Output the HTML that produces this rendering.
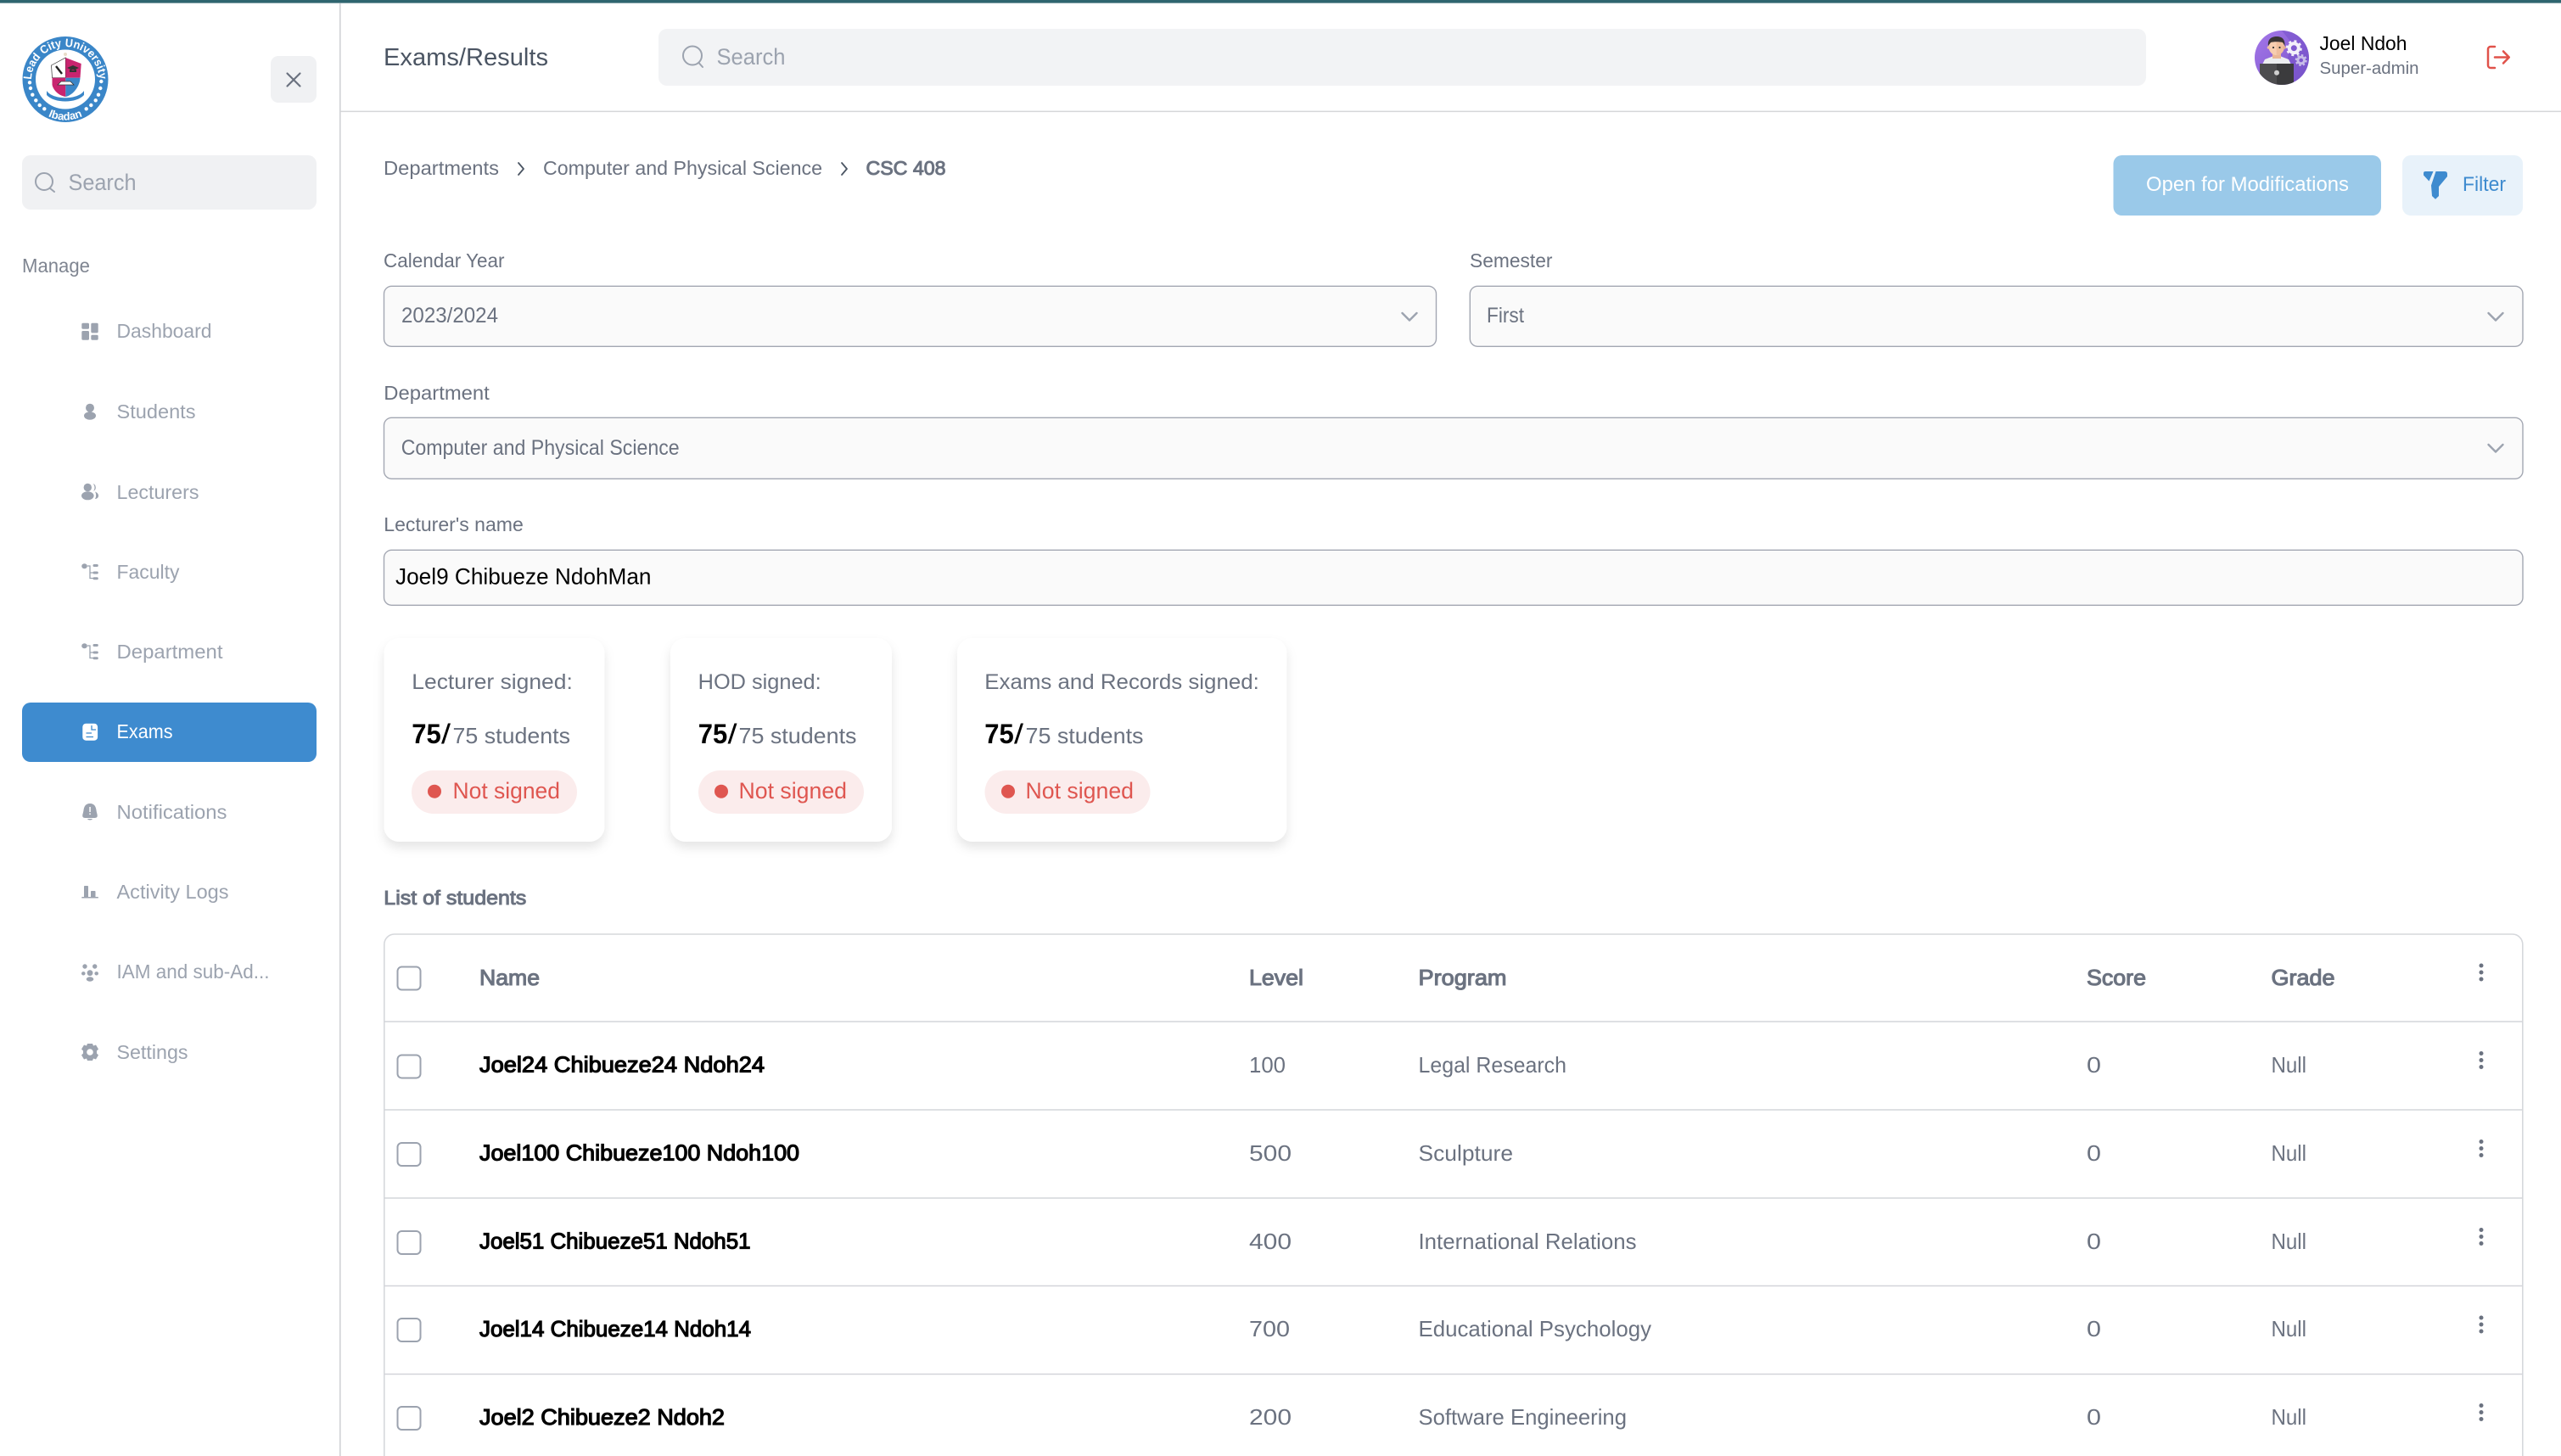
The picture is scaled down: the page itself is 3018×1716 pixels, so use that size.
<!DOCTYPE html>
<html lang="en">
<head>
<meta charset="utf-8">
<title>Exams/Results</title>
<style>
html,body{margin:0;padding:0;background:#fff;width:3018px;height:1716px;overflow:hidden}
svg{display:block}
text{font-family:"Liberation Sans",sans-serif;white-space:pre}
.nav{font-size:23px;fill:#9ca3af}
.lbl{font-size:23px;fill:#6b7280}
.val{font-size:25px;fill:#6b7280}
.crd{font-size:25px;fill:#6b7280}
.big{font-size:32px;font-weight:700;fill:#000}
.sl{font-size:32px;fill:#000}
.std{font-size:26px;fill:#6b7280}
.ns{font-size:27px;fill:#df5650}
.th{font-size:26px;fill:#6b7280;stroke:#6b7280;stroke-width:1.1}
.nm{font-size:26px;fill:#000;stroke:#000;stroke-width:1.2}
.td{font-size:26px;fill:#6b7280}
.ic{fill:#9ca3af}
.cb{fill:#fff;stroke:#9ca3af;stroke-width:2}
.rl{stroke:#d3d5da;stroke-width:1.6}
.kb{fill:#6b7280}
.sel{fill:#fafafa;stroke:#a3a7b2;stroke-width:1.4}
.chev{fill:none;stroke:#9ca3af;stroke-width:2.4;stroke-linecap:round;stroke-linejoin:round}
.card{fill:#fff;filter:url(#sh)}
.pill{fill:#fbecec}
.dot{fill:#df5650}
</style>
</head>
<body>
<svg xmlns="http://www.w3.org/2000/svg" width="3018" height="1716" viewBox="0 0 3018 1716">
<defs>
<filter id="sh" x="-20%" y="-20%" width="140%" height="140%"><feDropShadow dx="0" dy="7" stdDeviation="6" flood-color="#000" flood-opacity=".1"/></filter>
<clipPath id="av"><circle cx="2689" cy="68" r="32"/></clipPath>
<linearGradient id="avg" x1="0" y1="0" x2="1" y2="1"><stop offset="0" stop-color="#a678ea"/><stop offset="1" stop-color="#7552c8"/></linearGradient>
<path id="arcT" d="M37 95 A40 40 0 0 1 117 95"/>
<path id="arcB" d="M29 93.5 A48 48 0 0 0 125 93.5"/>
</defs>

<rect width="3018" height="1716" fill="#fff"/>
<rect x="0" y="0" width="3018" height="3.6" fill="#2f656f"/>

<!-- sidebar -->
<rect x="400" y="4" width="1.6" height="1712" fill="#d0d2d6"/>
<rect x="401" y="130.6" width="2617" height="1.5" fill="#d6d7d9"/>

<!-- logo -->
<g>
<circle cx="77" cy="93.5" r="50.5" fill="#3a86c8"/>
<circle cx="77" cy="93.5" r="35" fill="#fff"/>
<text fill="#fff" font-weight="700" style="font-size:13.5px"><textPath href="#arcT" startOffset="1" textLength="123" lengthAdjust="spacingAndGlyphs">Lead City University</textPath></text>
<text fill="#fff" font-weight="700" text-anchor="middle" style="font-size:13px"><textPath href="#arcB" startOffset="50%">Ibadan</textPath></text>
<g fill="#fff">
<circle cx="35" cy="97.3" r="2.2"/><circle cx="36" cy="104" r="2.2"/><circle cx="38.3" cy="111.7" r="2.2"/><circle cx="42.3" cy="118.3" r="2.2"/><circle cx="46.7" cy="124" r="2.2"/><circle cx="52.3" cy="128.3" r="2.2"/>
<circle cx="119.3" cy="96" r="2.2"/><circle cx="118.3" cy="104" r="2.2"/><circle cx="116" cy="111.7" r="2.2"/><circle cx="112.7" cy="118.3" r="2.2"/><circle cx="107.3" cy="124" r="2.2"/><circle cx="101.7" cy="128.3" r="2.2"/>
</g>
<path d="M60.5 77 L77.3 68 V91.7 H61.5 Z" fill="#fff" stroke="#333" stroke-width=".7"/>
<path d="M77.3 68 L95.7 75 L94.5 91.7 H77.3 Z" fill="#c8246f"/>
<path d="M61.5 91.7 H77.3 V114 C70 113 63 107 61.5 100 Z" fill="#c8246f"/>
<path d="M77.3 91.7 H94.5 C94 102 86 112 77.3 114 Z" fill="#3a86c8"/>
<path d="M66 78 L73 87" stroke="#222" stroke-width="2.4"/>
<path d="M79 80 L86 77 L93 80 L86 83 Z M82 82 V85 H90 V82" fill="#333"/>
<path d="M68 100 L72 96 H83 L87 100 Z" fill="#fff" stroke="#333" stroke-width=".8"/>
<path d="M55 107 C62 118 92 118 99 107 L99 112 C90 122 64 122 55 112 Z" fill="#3a86c8"/>
<circle cx="77" cy="64" r="2" fill="#e8dcc8"/>
</g>

<!-- close -->
<rect x="319" y="66" width="54" height="55" rx="9" fill="#f0f1f3"/>
<path d="M338.500 86.500 L353.500 101.500 M353.500 86.500 L338.500 101.500" stroke="#6b7280" stroke-width="2.2" stroke-linecap="round"/>

<!-- side search -->
<rect x="26" y="183" width="347" height="64" rx="10" fill="#f0f1f3"/>
<circle cx="52" cy="214" r="10" fill="none" stroke="#9ca3af" stroke-width="2"/>
<path d="M59 222 L64 226" stroke="#9ca3af" stroke-width="2" stroke-linecap="round"/>
<text x="80.500" y="224" style="font-size:27px;fill:#9ca3af" textLength="80" lengthAdjust="spacingAndGlyphs">Search</text>

<text x="26" y="321" style="font-size:23px;fill:#7f8591" textLength="80" lengthAdjust="spacingAndGlyphs">Manage</text>

<!-- nav -->
<g class="ic">
<rect x="96.300" y="380.700" width="8.700" height="7" rx="1.500"/><rect x="107.300" y="380.700" width="8.400" height="11.700" rx="1.500"/><rect x="96.300" y="390" width="8.700" height="10.700" rx="1.500"/><rect x="107.300" y="394.700" width="8.400" height="6" rx="1.500"/>
<circle cx="106" cy="480.700" r="5"/><ellipse cx="106" cy="490" rx="7" ry="4.700"/>
<circle cx="103.300" cy="574.500" r="4.700"/><ellipse cx="103.300" cy="584.300" rx="7.300" ry="5"/><path d="M109.500 570 A4.700 4.700 0 0 1 110 578.800 A6.500 6.500 0 0 0 109.500 570 Z M112 579.500 C115 580.500 116.500 583 116 585 C115.500 587 113.500 588 112 588 C113.500 585.500 113.500 582 112 579.500 Z"/>
<g><ellipse cx="99.500" cy="667.300" rx="3.300" ry="3"/><path d="M103 667 H106 V681.500 H110 M106 675 H110" fill="none" stroke="#9ca3af" stroke-width="1.300"/><rect x="109.500" y="665" width="6.300" height="3" rx="1.500"/><rect x="109.500" y="673.500" width="6.300" height="3" rx="1.500"/><rect x="109.500" y="680.300" width="6.300" height="3" rx="1.500"/></g>
<g transform="translate(0 94)"><ellipse cx="99.500" cy="667.300" rx="3.300" ry="3"/><path d="M103 667 H106 V681.500 H110 M106 675 H110" fill="none" stroke="#9ca3af" stroke-width="1.300"/><rect x="109.500" y="665" width="6.300" height="3" rx="1.500"/><rect x="109.500" y="673.500" width="6.300" height="3" rx="1.500"/><rect x="109.500" y="680.300" width="6.300" height="3" rx="1.500"/></g>
</g>
<rect x="26" y="828" width="347" height="70" rx="10" fill="#3e8bcf"/>
<rect x="97.300" y="852.700" width="17.800" height="20" rx="4" fill="#fff"/>
<path d="M108 855 V860 H113 M101.500 864 H108 M101.500 868.500 H110" fill="none" stroke="#3e8bcf" stroke-width="1.300"/>
<g class="ic">
<path d="M106 947 C100.500 947 99 951 98.500 955 C98 958.500 97 960 97.300 962 C97.500 963.500 99 964 101 964 H111 C113 964 114.500 963.500 114.700 962 C115 960 114 958.500 113.500 955 C113 951 111.500 947 106 947 Z"/><path d="M103 965 H109 C108.500 967 103.500 967 103 965 Z"/>
<rect x="105.300" y="951" width="1.500" height="6" fill="#fff"/><rect x="105.300" y="958.500" width="1.500" height="1.600" fill="#fff"/>
<rect x="99" y="1044" width="5" height="14" rx=".8"/><rect x="107" y="1050" width="5.500" height="8" rx=".8"/><rect x="96.300" y="1057" width="19.500" height="1.500"/>
<circle cx="100" cy="1139" r="2.700"/><circle cx="111.700" cy="1139" r="2.700"/><circle cx="106" cy="1146.700" r="3.400"/><ellipse cx="98.300" cy="1147.300" rx="2.300" ry="2.200"/><ellipse cx="113.700" cy="1147.300" rx="2.300" ry="2.200"/><ellipse cx="106" cy="1154" rx="4.300" ry="2.700"/>
<path fill-rule="evenodd" d="M103 1230 H109 L110 1232.500 L113 1231.500 L116 1236.500 L114 1238.500 V1241.500 L116 1243.500 L113 1248.500 L110 1247.500 L109 1250 H103 L102 1247.500 L99 1248.500 L96 1243.500 L98 1241.500 V1238.500 L96 1236.500 L99 1231.500 L102 1232.500 Z M106 1236.200 A3.800 3.800 0 1 0 106 1243.800 A3.800 3.800 0 1 0 106 1236.200 Z"/>
</g>
<text class="nav" x="137.500" y="398" textLength="112" lengthAdjust="spacingAndGlyphs">Dashboard</text>
<text class="nav" x="137.500" y="493" textLength="93" lengthAdjust="spacingAndGlyphs">Students</text>
<text class="nav" x="137.500" y="588" textLength="97" lengthAdjust="spacingAndGlyphs">Lecturers</text>
<text class="nav" x="137.500" y="682" textLength="74" lengthAdjust="spacingAndGlyphs">Faculty</text>
<text class="nav" x="137.500" y="776" textLength="125" lengthAdjust="spacingAndGlyphs">Department</text>
<text class="nav" x="137.500" y="870" textLength="66" lengthAdjust="spacingAndGlyphs" style="fill:#fff">Exams</text>
<text class="nav" x="137.500" y="965" textLength="130" lengthAdjust="spacingAndGlyphs">Notifications</text>
<text class="nav" x="137.500" y="1059" textLength="132" lengthAdjust="spacingAndGlyphs">Activity Logs</text>
<text class="nav" x="137.500" y="1153" textLength="180" lengthAdjust="spacingAndGlyphs">IAM and sub-Ad...</text>
<text class="nav" x="137.500" y="1248" textLength="84" lengthAdjust="spacingAndGlyphs">Settings</text>

<!-- header -->
<text x="452" y="77" style="font-size:29px;fill:#4b5563" textLength="194" lengthAdjust="spacingAndGlyphs">Exams/Results</text>
<rect x="776" y="34" width="1753" height="67" rx="10" fill="#f2f3f5"/>
<circle cx="816" cy="65.500" r="11" fill="none" stroke="#9ca3af" stroke-width="2"/>
<path d="M823.500 74 L828 79" stroke="#9ca3af" stroke-width="2" stroke-linecap="round"/>
<text x="844.500" y="76" style="font-size:27px;fill:#9ca3af" textLength="81" lengthAdjust="spacingAndGlyphs">Search</text>

<!-- avatar -->
<g clip-path="url(#av)">
<rect x="2655" y="34" width="68" height="68" fill="url(#avg)"/>
<path d="M2689 36 A32 32 0 0 1 2721 68 A32 32 0 0 1 2689 100 L2700 50 Z" fill="#7853cb" opacity=".6"/>
<g fill="none" stroke="#f3f0fa">
<circle cx="2703.300" cy="56.700" r="5.500" stroke-width="4"/><circle cx="2703.300" cy="56.700" r="8.300" stroke-width="2.400" stroke-dasharray="3 3.500"/>
</g>
<g fill="none" stroke="#c7bce8">
<circle cx="2711.700" cy="71" r="3.800" stroke-width="3"/><circle cx="2711.700" cy="71" r="6" stroke-width="2" stroke-dasharray="2.500 2.200"/>
</g>
<path d="M2666 76 L2669 70 L2678 66.500 H2688 L2697 70 L2700 76 Z" fill="#eceef0"/>
<rect x="2678" y="61" width="10" height="8" fill="#eab796"/>
<ellipse cx="2682.700" cy="55" rx="9.200" ry="10" fill="#f7cdb0"/>
<path d="M2682.700 45 A9.200 10 0 0 1 2692 55 A9.200 10 0 0 1 2682.700 65 Z" fill="#efbe9d"/>
<circle cx="2673.500" cy="56" r="1.800" fill="#f0bf9f"/><circle cx="2692" cy="56" r="1.800" fill="#e6b08e"/>
<path d="M2673 54 C2672 46 2677 43 2683 43 C2689 43 2693 46 2692.500 54 L2690 50 C2686 49 2679 49 2676 50 Z" fill="#3a3536"/>
<circle cx="2679" cy="56" r="1.100" fill="#333"/><circle cx="2686.500" cy="56" r="1.100" fill="#333"/>
<rect x="2663" y="75" width="20" height="26" fill="#4d4d4f"/><rect x="2683" y="75" width="20" height="26" fill="#3b3b3d"/>
<circle cx="2683" cy="85.700" r="3" fill="#cfcfcf"/>
</g>
<text x="2733.500" y="59" style="font-size:23.500px;fill:#000" textLength="103" lengthAdjust="spacingAndGlyphs">Joel Ndoh</text>
<text x="2733.500" y="87" style="font-size:20.500px;fill:#6b7280" textLength="117" lengthAdjust="spacingAndGlyphs">Super-admin</text>
<path d="M2940 55 H2935 A3 3 0 0 0 2932 58 V77 A3 3 0 0 0 2935 80 H2940 M2940 67.500 H2956.500 M2950 60.500 L2956.800 67.500 L2950 74.500" fill="none" stroke="#e0524a" stroke-width="2.500" stroke-linecap="round" stroke-linejoin="round"/>

<!-- breadcrumb -->
<text class="lbl" x="452" y="206" textLength="136" lengthAdjust="spacingAndGlyphs">Departments</text>
<path d="M611 192 L617 199 L611 206" fill="none" stroke="#4b5563" stroke-width="1.800" stroke-linecap="round" stroke-linejoin="round"/>
<text class="lbl" x="640" y="206" textLength="329" lengthAdjust="spacingAndGlyphs">Computer and Physical Science</text>
<path d="M992 192 L998 199 L992 206" fill="none" stroke="#4b5563" stroke-width="1.800" stroke-linecap="round" stroke-linejoin="round"/>
<text class="lbl" x="1020.500" y="206" textLength="94" lengthAdjust="spacingAndGlyphs" style="stroke:#6b7280;stroke-width:1">CSC 408</text>

<!-- buttons -->
<rect x="2490.500" y="183" width="315.500" height="71" rx="10" fill="#9ac9e9"/>
<text x="2529" y="225" style="font-size:24px;fill:#fff" textLength="239" lengthAdjust="spacingAndGlyphs">Open for Modifications</text>
<rect x="2831" y="183" width="142" height="71" rx="10" fill="#e8f2fa"/>
<path d="M2856 204 Q2856 202 2858.500 202 H2867.500 L2862.500 213.500 L2856 206.500 Z M2870.500 202 H2881 Q2884 202 2884 205 V208 L2874 220 V231 L2870 234.800 L2866 231 L2865 218.500 Z" fill="#3e8bcf"/>
<text x="2902" y="225" style="font-size:24px;fill:#3e8bcf" textLength="51" lengthAdjust="spacingAndGlyphs">Filter</text>

<!-- form -->
<text class="lbl" x="452" y="315" textLength="142.500" lengthAdjust="spacingAndGlyphs">Calendar Year</text>
<rect class="sel" x="452.500" y="337.300" width="1240" height="71" rx="9"/>
<text class="val" x="473" y="380" textLength="114" lengthAdjust="spacingAndGlyphs">2023/2024</text>
<path class="chev" d="M1652.500 369 L1661 377.500 L1669.500 369"/>
<text class="lbl" x="1732" y="315" textLength="97.500" lengthAdjust="spacingAndGlyphs">Semester</text>
<rect class="sel" x="1732.300" y="337.300" width="1240.700" height="71" rx="9"/>
<text class="val" x="1752" y="380" textLength="44" lengthAdjust="spacingAndGlyphs">First</text>
<path class="chev" d="M2932.500 369 L2941 377.500 L2949.500 369"/>

<text class="lbl" x="452.300" y="471" textLength="124.500" lengthAdjust="spacingAndGlyphs">Department</text>
<rect class="sel" x="452.500" y="492.300" width="2520.500" height="72" rx="9"/>
<text class="val" x="472.700" y="536" textLength="328" lengthAdjust="spacingAndGlyphs">Computer and Physical Science</text>
<path class="chev" d="M2932.500 524 L2941 532.500 L2949.500 524"/>

<text class="lbl" x="452.300" y="626" textLength="164.500" lengthAdjust="spacingAndGlyphs">Lecturer's name</text>
<rect class="sel" x="452.500" y="648.300" width="2520.500" height="65" rx="9"/>
<text x="466" y="688.700" style="font-size:27px;fill:#000" textLength="301.500" lengthAdjust="spacingAndGlyphs">Joel9 Chibueze NdohMan</text>

<!-- cards -->
<rect class="card" x="452.500" y="752" width="260" height="240" rx="18"/>
<text class="crd" x="485.300" y="812" textLength="189.500" lengthAdjust="spacingAndGlyphs">Lecturer signed:</text>
<text class="big" x="485.300" y="876" textLength="34.500" lengthAdjust="spacingAndGlyphs">75</text>
<text class="sl" x="520" y="876" textLength="11" lengthAdjust="spacingAndGlyphs">/</text>
<text class="std" x="533.500" y="876" textLength="138.500" lengthAdjust="spacingAndGlyphs">75 students</text>
<rect class="pill" x="485" y="908" width="195" height="51" rx="25.500"/>
<circle class="dot" cx="512" cy="932.700" r="8"/>
<text class="ns" x="533.500" y="941" textLength="126.500" lengthAdjust="spacingAndGlyphs">Not signed</text>

<rect class="card" x="790" y="752" width="261" height="240" rx="18"/>
<text class="crd" x="822.700" y="812" textLength="145" lengthAdjust="spacingAndGlyphs">HOD signed:</text>
<text class="big" x="822.700" y="876" textLength="34.500" lengthAdjust="spacingAndGlyphs">75</text>
<text class="sl" x="857.500" y="876" textLength="11" lengthAdjust="spacingAndGlyphs">/</text>
<text class="std" x="870.500" y="876" textLength="139" lengthAdjust="spacingAndGlyphs">75 students</text>
<rect class="pill" x="823" y="908" width="195" height="51" rx="25.500"/>
<circle class="dot" cx="850" cy="932.700" r="8"/>
<text class="ns" x="870.500" y="941" textLength="127.500" lengthAdjust="spacingAndGlyphs">Not signed</text>

<rect class="card" x="1128" y="752" width="388.500" height="240" rx="18"/>
<text class="crd" x="1160.300" y="812" textLength="323.500" lengthAdjust="spacingAndGlyphs">Exams and Records signed:</text>
<text class="big" x="1160.300" y="876" textLength="34.500" lengthAdjust="spacingAndGlyphs">75</text>
<text class="sl" x="1195" y="876" textLength="11" lengthAdjust="spacingAndGlyphs">/</text>
<text class="std" x="1208.500" y="876" textLength="139" lengthAdjust="spacingAndGlyphs">75 students</text>
<rect class="pill" x="1160.500" y="908" width="195" height="51" rx="25.500"/>
<circle class="dot" cx="1188" cy="932.700" r="8"/>
<text class="ns" x="1208.500" y="941" textLength="127.500" lengthAdjust="spacingAndGlyphs">Not signed</text>

<!-- table -->
<text x="452.300" y="1066" style="font-size:23px;fill:#6b7280;stroke:#6b7280;stroke-width:1" textLength="168" lengthAdjust="spacingAndGlyphs">List of students</text>
<path d="M452.800 1716 V1113 A12 12 0 0 1 464.800 1101 H2960.800 A12 12 0 0 1 2972.800 1113 V1716" fill="none" stroke="#d6d8dc" stroke-width="1.600"/>
<path class="rl" d="M453 1204 H2973 M453 1308 H2973 M453 1412 H2973 M453 1515.500 H2973 M453 1619.500 H2973"/>

<rect class="cb" x="468.500" y="1139.500" width="27" height="27" rx="5"/>
<text class="th" x="565" y="1161" textLength="71" lengthAdjust="spacingAndGlyphs">Name</text>
<text class="th" x="1472" y="1161" textLength="64" lengthAdjust="spacingAndGlyphs">Level</text>
<text class="th" x="1671.500" y="1161" textLength="104" lengthAdjust="spacingAndGlyphs">Program</text>
<text class="th" x="2459" y="1161" textLength="70" lengthAdjust="spacingAndGlyphs">Score</text>
<text class="th" x="2676.500" y="1161" textLength="75" lengthAdjust="spacingAndGlyphs">Grade</text>
<g class="kb"><circle cx="2924" cy="1138" r="2.500"/><circle cx="2924" cy="1146" r="2.500"/><circle cx="2924" cy="1154" r="2.500"/></g>

<rect class="cb" x="468.500" y="1243.500" width="27" height="27" rx="5"/>
<text class="nm" x="565" y="1263.500" textLength="336" lengthAdjust="spacingAndGlyphs">Joel24 Chibueze24 Ndoh24</text>
<text class="td" x="1472" y="1264" textLength="43" lengthAdjust="spacingAndGlyphs">100</text>
<text class="td" x="1671.500" y="1264" textLength="174.500" lengthAdjust="spacingAndGlyphs">Legal Research</text>
<text class="td" x="2459" y="1264" textLength="17" lengthAdjust="spacingAndGlyphs">0</text>
<text class="td" x="2676.500" y="1264" textLength="41.500" lengthAdjust="spacingAndGlyphs">Null</text>
<g class="kb"><circle cx="2924" cy="1241.500" r="2.500"/><circle cx="2924" cy="1249.500" r="2.500"/><circle cx="2924" cy="1257.500" r="2.500"/></g>

<rect class="cb" x="468.500" y="1347" width="27" height="27" rx="5"/>
<text class="nm" x="565" y="1367.500" textLength="377" lengthAdjust="spacingAndGlyphs">Joel100 Chibueze100 Ndoh100</text>
<text class="td" x="1472" y="1368" textLength="50" lengthAdjust="spacingAndGlyphs">500</text>
<text class="td" x="1671.500" y="1368" textLength="111.500" lengthAdjust="spacingAndGlyphs">Sculpture</text>
<text class="td" x="2459" y="1368" textLength="17" lengthAdjust="spacingAndGlyphs">0</text>
<text class="td" x="2676.500" y="1368" textLength="41.500" lengthAdjust="spacingAndGlyphs">Null</text>
<g class="kb"><circle cx="2924" cy="1345.500" r="2.500"/><circle cx="2924" cy="1353.500" r="2.500"/><circle cx="2924" cy="1361.500" r="2.500"/></g>

<rect class="cb" x="468.500" y="1451" width="27" height="27" rx="5"/>
<text class="nm" x="565" y="1471.500" textLength="319.500" lengthAdjust="spacingAndGlyphs">Joel51 Chibueze51 Ndoh51</text>
<text class="td" x="1472" y="1472" textLength="50" lengthAdjust="spacingAndGlyphs">400</text>
<text class="td" x="1671.500" y="1472" textLength="257" lengthAdjust="spacingAndGlyphs">International Relations</text>
<text class="td" x="2459" y="1472" textLength="17" lengthAdjust="spacingAndGlyphs">0</text>
<text class="td" x="2676.500" y="1472" textLength="41.500" lengthAdjust="spacingAndGlyphs">Null</text>
<g class="kb"><circle cx="2924" cy="1449.500" r="2.500"/><circle cx="2924" cy="1457.500" r="2.500"/><circle cx="2924" cy="1465.500" r="2.500"/></g>

<rect class="cb" x="468.500" y="1554" width="27" height="27" rx="5"/>
<text class="nm" x="565" y="1575" textLength="320" lengthAdjust="spacingAndGlyphs">Joel14 Chibueze14 Ndoh14</text>
<text class="td" x="1472" y="1575" textLength="48" lengthAdjust="spacingAndGlyphs">700</text>
<text class="td" x="1671.500" y="1575" textLength="274.500" lengthAdjust="spacingAndGlyphs">Educational Psychology</text>
<text class="td" x="2459" y="1575" textLength="17" lengthAdjust="spacingAndGlyphs">0</text>
<text class="td" x="2676.500" y="1575" textLength="41.500" lengthAdjust="spacingAndGlyphs">Null</text>
<g class="kb"><circle cx="2924" cy="1553" r="2.500"/><circle cx="2924" cy="1561" r="2.500"/><circle cx="2924" cy="1569" r="2.500"/></g>

<rect class="cb" x="468.500" y="1658" width="27" height="27" rx="5"/>
<text class="nm" x="565" y="1679" textLength="289" lengthAdjust="spacingAndGlyphs">Joel2 Chibueze2 Ndoh2</text>
<text class="td" x="1472" y="1679" textLength="50" lengthAdjust="spacingAndGlyphs">200</text>
<text class="td" x="1671.500" y="1679" textLength="245.500" lengthAdjust="spacingAndGlyphs">Software Engineering</text>
<text class="td" x="2459" y="1679" textLength="17" lengthAdjust="spacingAndGlyphs">0</text>
<text class="td" x="2676.500" y="1679" textLength="41.500" lengthAdjust="spacingAndGlyphs">Null</text>
<g class="kb"><circle cx="2924" cy="1656.500" r="2.500"/><circle cx="2924" cy="1664.500" r="2.500"/><circle cx="2924" cy="1672.500" r="2.500"/></g>
</svg>
</body>
</html>
